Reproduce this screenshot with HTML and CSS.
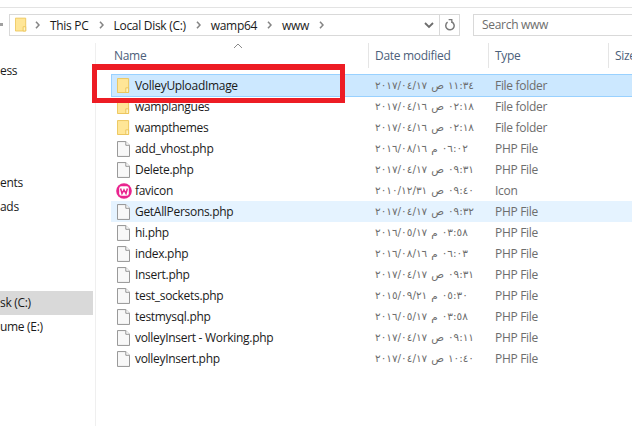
FILE: index.html
```html
<!DOCTYPE html>
<html lang="en">
<head>
    <meta charset="UTF-8">
    <meta name="viewport" content="width=device-width, initial-scale=1.0">
    <title>www</title>
    <link rel="stylesheet" href="styles.css">
</head>
<body>
    <svg class="defs" width="0" height="0">
        <symbol id="folder" viewBox="0 0 14 17">
            <path d="M.5.5h12v15H.5z" fill="#ffe697" stroke="#ecc457"/>
            <path d="M9.5 15.5v-5h3v5z" fill="#fff3c4" stroke="#ecc457"/>
        </symbol>
        <symbol id="file" viewBox="0 0 14 17">
            <path d="M.5.5h9l4 4v12H.5z" fill="#f8f8f8" stroke="#8c8c8c"/>
            <path d="M9.5.5v4h4" fill="#fff" stroke="#8c8c8c"/>
        </symbol>
        <symbol id="wamp" viewBox="0 0 16 16">
            <circle cx="8" cy="8" r="7.8" fill="#e9248f"/>
            <rect x="3.2" y="3.2" width="9.6" height="9.6" rx="2.2" fill="#fff"/>
            <path d="M4.6 5.5l1.4 5 2-3.6 2 3.6 1.4-5" fill="none" stroke="#e9248f" stroke-width="1.5"/>
        </symbol>
        <symbol id="chev" viewBox="0 0 5 8">
            <path d="M1 .8L4 4 1 7.2" fill="none" stroke="#858585" stroke-width="1.6"/>
        </symbol>
    </svg>

    <div class="toolbar">
        <span class="back-dot"></span>
        <div class="address">
            <svg class="crumb-icon" width="12" height="16"><use href="#folder"/></svg>
            <svg class="sep" width="5" height="8"><use href="#chev"/></svg>
            <span class="crumb">This PC</span>
            <svg class="sep" width="5" height="8"><use href="#chev"/></svg>
            <span class="crumb">Local Disk (C:)</span>
            <svg class="sep" width="5" height="8"><use href="#chev"/></svg>
            <span class="crumb">wamp64</span>
            <svg class="sep" width="5" height="8"><use href="#chev"/></svg>
            <span class="crumb">www</span>
            <svg class="sep" width="5" height="8"><use href="#chev"/></svg>
            <svg class="drop" width="10" height="7" viewBox="0 0 10 7"><path d="M1 1l4 4 4-4" fill="none" stroke="#6d6d6d" stroke-width="1.8"/></svg>
            <div class="refresh">
                <svg width="10" height="12" viewBox="0 0 10 12"><path d="M2.6 3.2A4.2 4.2 0 1 0 7 3" fill="none" stroke="#7a7a7a" stroke-width="1.5"/><path d="M3.6.6h3.2v3.4" fill="none" stroke="#7a7a7a" stroke-width="1.3"/></svg>
            </div>
        </div>
        <div class="search">Search www</div>
    </div>

    <div class="main">
        <div class="sidebar">
            <div class="nav-item">ess</div>
            <div class="nav-item group">ents</div>
            <div class="nav-item">ads</div>
            <div class="nav-item group2 current">sk (C:)</div>
            <div class="nav-item">ume (E:)</div>
        </div>
        <div class="list">
            <svg class="sort" width="10" height="6" viewBox="0 0 10 6"><path d="M1 5l4-4 4 4" fill="none" stroke="#8a8a8a"/></svg>
            <div class="head">
                <div class="col first">Name</div>
                <div class="col">Date modified</div>
                <div class="col">Type</div>
                <div class="col">Size</div>
            </div>
            <div class="row selected"><div class="name"><svg width="13" height="16"><use href="#folder"/></svg>VolleyUploadImage</div><div class="date"><span>٢٠١٧/٠٤/١٧</span><span>ص</span><span>١١:٣٤</span></div><div class="type">File folder</div></div>
            <div class="row"><div class="name"><svg width="13" height="16"><use href="#folder"/></svg>wamplangues</div><div class="date"><span>٢٠١٧/٠٤/١٦</span><span>ص</span><span>٠٢:١٨</span></div><div class="type">File folder</div></div>
            <div class="row"><div class="name"><svg width="13" height="16"><use href="#folder"/></svg>wampthemes</div><div class="date"><span>٢٠١٧/٠٤/١٦</span><span>ص</span><span>٠٢:١٨</span></div><div class="type">File folder</div></div>
            <div class="row"><div class="name"><svg width="13" height="16"><use href="#file"/></svg>add_vhost.php</div><div class="date"><span>٢٠١٦/٠٨/١٦</span><span>م</span><span>٠٦:٠٢</span></div><div class="type">PHP File</div></div>
            <div class="row"><div class="name"><svg width="13" height="16"><use href="#file"/></svg>Delete.php</div><div class="date"><span>٢٠١٧/٠٤/١٧</span><span>ص</span><span>٠٩:٣١</span></div><div class="type">PHP File</div></div>
            <div class="row"><div class="name"><svg class="app-icon" width="16" height="16"><use href="#wamp"/></svg>favicon</div><div class="date"><span>٢٠١٠/١٢/٣١</span><span>ص</span><span>٠٩:٤٠</span></div><div class="type">Icon</div></div>
            <div class="row hover"><div class="name"><svg width="13" height="16"><use href="#file"/></svg>GetAllPersons.php</div><div class="date"><span>٢٠١٧/٠٤/١٧</span><span>ص</span><span>٠٩:٣٢</span></div><div class="type">PHP File</div></div>
            <div class="row"><div class="name"><svg width="13" height="16"><use href="#file"/></svg>hi.php</div><div class="date"><span>٢٠١٦/٠٥/١٧</span><span>م</span><span>٠٣:٥٨</span></div><div class="type">PHP File</div></div>
            <div class="row"><div class="name"><svg width="13" height="16"><use href="#file"/></svg>index.php</div><div class="date"><span>٢٠١٦/٠٨/١٦</span><span>م</span><span>٠٦:٠٣</span></div><div class="type">PHP File</div></div>
            <div class="row"><div class="name"><svg width="13" height="16"><use href="#file"/></svg>Insert.php</div><div class="date"><span>٢٠١٧/٠٤/١٧</span><span>ص</span><span>٠٩:٣١</span></div><div class="type">PHP File</div></div>
            <div class="row"><div class="name"><svg width="13" height="16"><use href="#file"/></svg>test_sockets.php</div><div class="date"><span>٢٠١٥/٠٩/٢١</span><span>م</span><span>٠٥:٣٠</span></div><div class="type">PHP File</div></div>
            <div class="row"><div class="name"><svg width="13" height="16"><use href="#file"/></svg>testmysql.php</div><div class="date"><span>٢٠١٦/٠٥/١٧</span><span>م</span><span>٠٣:٥٨</span></div><div class="type">PHP File</div></div>
            <div class="row"><div class="name"><svg width="13" height="16"><use href="#file"/></svg>volleyInsert - Working.php</div><div class="date"><span>٢٠١٧/٠٤/١٧</span><span>ص</span><span>٠٩:١١</span></div><div class="type">PHP File</div></div>
            <div class="row"><div class="name"><svg width="13" height="16"><use href="#file"/></svg>volleyInsert.php</div><div class="date"><span>٢٠١٧/٠٤/١٧</span><span>ص</span><span>١٠:٤٠</span></div><div class="type">PHP File</div></div>
        </div>
    </div>

    <div class="highlight"></div>
</body>
</html>
```

FILE: styles.css
```css
html, body {
    margin: 0;
    padding: 0;
    height: 426px;
    overflow: hidden;
}
body {
    position: relative;
    background: #fff;
    color: #1a1a1a;
    font-family: "Open Sans", "DejaVu Sans", sans-serif;
    font-size: 12px;
    letter-spacing: -0.3px;
}
.defs {
    display: block;
    height: 0;
}
.toolbar {
    display: flex;
    align-items: flex-start;
    height: 36px;
    margin-top: 7px;
    padding-top: 6px;
    box-sizing: border-box;
    border-top: 1px solid #e3e3e3;
}
.back-dot {
    width: 3px;
    height: 3px;
    margin-top: 9px;
    margin-right: 6px;
    background: #a0a0a0;
}
.address {
    display: flex;
    align-items: center;
    width: 451px;
    height: 22px;
    padding-left: 5px;
    box-sizing: border-box;
    border: 1px solid #d9d9d9;
}
.crumb-icon {
    margin-right: 8px;
}
.crumb {
    margin: 0 10px;
    white-space: nowrap;
}
.sep {
    flex: none;
}
.drop {
    margin-left: auto;
    margin-right: 5px;
}
.refresh {
    display: flex;
    align-items: center;
    justify-content: center;
    width: 19px;
    height: 100%;
    border-left: 1px solid #d9d9d9;
}
.search {
    flex: 1;
    height: 22px;
    line-height: 20px;
    margin-left: 13px;
    padding-left: 8px;
    box-sizing: border-box;
    border: 1px solid #d9d9d9;
    border-right: none;
    color: #6d6d6d;
}
.main {
    display: flex;
    height: 383px;
}
.sidebar {
    width: 95px;
    flex: none;
    padding-top: 16px;
    border-right: 1px solid #efefef;
}
.nav-item {
    height: 24px;
    line-height: 24px;
    width: 93px;
}
.group {
    margin-top: 88px;
}
.group2 {
    margin-top: 72px;
}
.current {
    background: #d9d9d9;
}
.list {
    position: relative;
    flex: 1;
    padding-left: 15px;
}
.sort {
    position: absolute;
    left: 137px;
    top: 0;
}
.head {
    display: grid;
    grid-template-columns: 257px 120px 120px 1fr;
    height: 25px;
    margin-bottom: 7px;
    color: #4c607a;
}
.col {
    padding-left: 6px;
    line-height: 25px;
    border-left: 1px solid #e5e5e5;
    white-space: nowrap;
}
.col.first {
    border-left: none;
    padding-left: 3px;
}
.row {
    display: grid;
    grid-template-columns: 257px 120px 1fr;
    height: 21px;
    line-height: 21px;
    box-sizing: border-box;
}
.selected {
    grid-template-columns: 256px 120px 1fr;
    margin-left: 1px;
    background: #cce8ff;
    outline: 1px solid #99d1ff;
}
.selected .name {
    padding-left: 5px;
}
.hover {
    background: #e5f3ff;
}
.name {
    display: flex;
    align-items: center;
    gap: 5px;
    padding-left: 6px;
}
.app-icon {
    margin-left: -1px;
    margin-right: -2px;
}
.date {
    display: flex;
    gap: 4px;
    padding-left: 7px;
    color: #6d6d6d;
    font-family: "DejaVu Sans", sans-serif;
    font-size: 10.5px;
    letter-spacing: -1.7px;
}
.date span {
    unicode-bidi: isolate;
}
.type {
    padding-left: 7px;
    color: #6d6d6d;
}
.highlight {
    position: absolute;
    left: 92px;
    top: 64px;
    width: 253px;
    height: 39px;
    box-sizing: border-box;
    border: 5px solid #ed1c24;
    border-top-width: 6px;
}
```
